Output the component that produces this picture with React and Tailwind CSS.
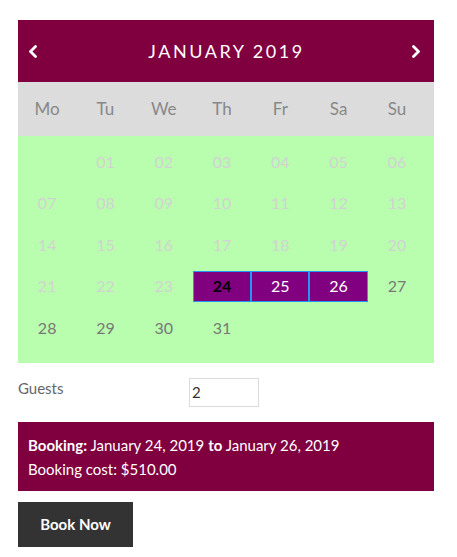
import React, { useState } from 'react';

const weekDays = ['Mo', 'Tu', 'We', 'Th', 'Fr', 'Sa', 'Su'];

// January 2019 starts on a Tuesday
const weeks = [
  [null, '01', '02', '03', '04', '05', '06'],
  ['07', '08', '09', '10', '11', '12', '13'],
  ['14', '15', '16', '17', '18', '19', '20'],
  ['21', '22', '23', '24', '25', '26', '27'],
  ['28', '29', '30', '31', null, null, null],
];

const firstAvailable = 24;
const selected = ['24', '25', '26'];

const Chevron = ({ dir }) => (
  <svg width="10" height="13" viewBox="0 0 10 13" fill="none">
    <polyline
      points={dir === 'left' ? '7.5,1.5 2.5,6.5 7.5,11.5' : '2.5,1.5 7.5,6.5 2.5,11.5'}
      stroke="white"
      strokeWidth="2.8"
      strokeLinecap="round"
      strokeLinejoin="round"
    />
  </svg>
);

const App = () => {
  const [guests, setGuests] = useState('2');

  return (
    <div className="min-h-screen bg-white pt-5 px-[18px] font-['Lato','Liberation_Sans',sans-serif]">
      <div className="w-[416px]">
        {/* Month header */}
        <div className="h-[62px] bg-[#80003f] flex items-center justify-between pl-[9px] pr-[12px] text-white">
          <button className="w-[12px] flex justify-center"><Chevron dir="left" /></button>
          <span className="text-[18px] tracking-[0.14em] pl-1">JANUARY 2019</span>
          <button className="w-[12px] flex justify-center"><Chevron dir="right" /></button>
        </div>

        {/* Weekday names */}
        <div className="h-[54px] bg-[#dcdcdc] flex items-center">
          {weekDays.map((d) => (
            <div key={d} className="w-[58.3px] text-center text-[17px] text-[#888]">
              {d}
            </div>
          ))}
        </div>

        {/* Dates */}
        <div className="bg-[#b9feae] pt-[5px] pb-[14px]">
          {weeks.map((week, wi) => (
            <div key={wi} className="flex h-[41.5px] items-center">
              {week.map((day, di) => {
                const isSel = day && selected.includes(day);
                const isAvail = day && Number(day) >= firstAvailable;
                return (
                  <div key={di} className="w-[58.3px] h-full flex items-center justify-center">
                    {day && (
                      <div
                        className={
                          isSel
                            ? `w-full h-[31px] flex items-center justify-center bg-[#800080] border border-[#2196f3] text-[16px] ${
                                day === '24' ? 'text-black font-bold' : 'text-white'
                              }`
                            : `text-[16px] ${isAvail ? 'text-[#777]' : 'text-[#d2d2d2]'}`
                        }
                      >
                        {day}
                      </div>
                    )}
                  </div>
                );
              })}
            </div>
          ))}
        </div>

        {/* Guests */}
        <div className="flex items-start mt-[15px]">
          <label className="w-[171px] text-[15px] text-[#666] -mt-[1px]">Guests</label>
          <input
            type="number"
            value={guests}
            onChange={(e) => setGuests(e.target.value)}
            className="w-[70px] h-[29px] border border-[#dcdcdc] px-[2px] text-[15px] text-[#333] outline-none [appearance:textfield]"
          />
        </div>

        {/* Booking summary */}
        <div className="mt-[15px] h-[69px] bg-[#80003f] text-white px-[10px] pt-[11px] text-[15px] leading-[24px]">
          <p>
            <strong>Booking:</strong> January 24, 2019 <strong>to</strong> January 26, 2019
          </p>
          <p>Booking cost: $510.00</p>
        </div>

        <button className="mt-[11px] w-[115px] h-[45px] bg-[#333] text-white font-bold text-[15px]">
          Book Now
        </button>
      </div>
    </div>
  );
};

export default App;
